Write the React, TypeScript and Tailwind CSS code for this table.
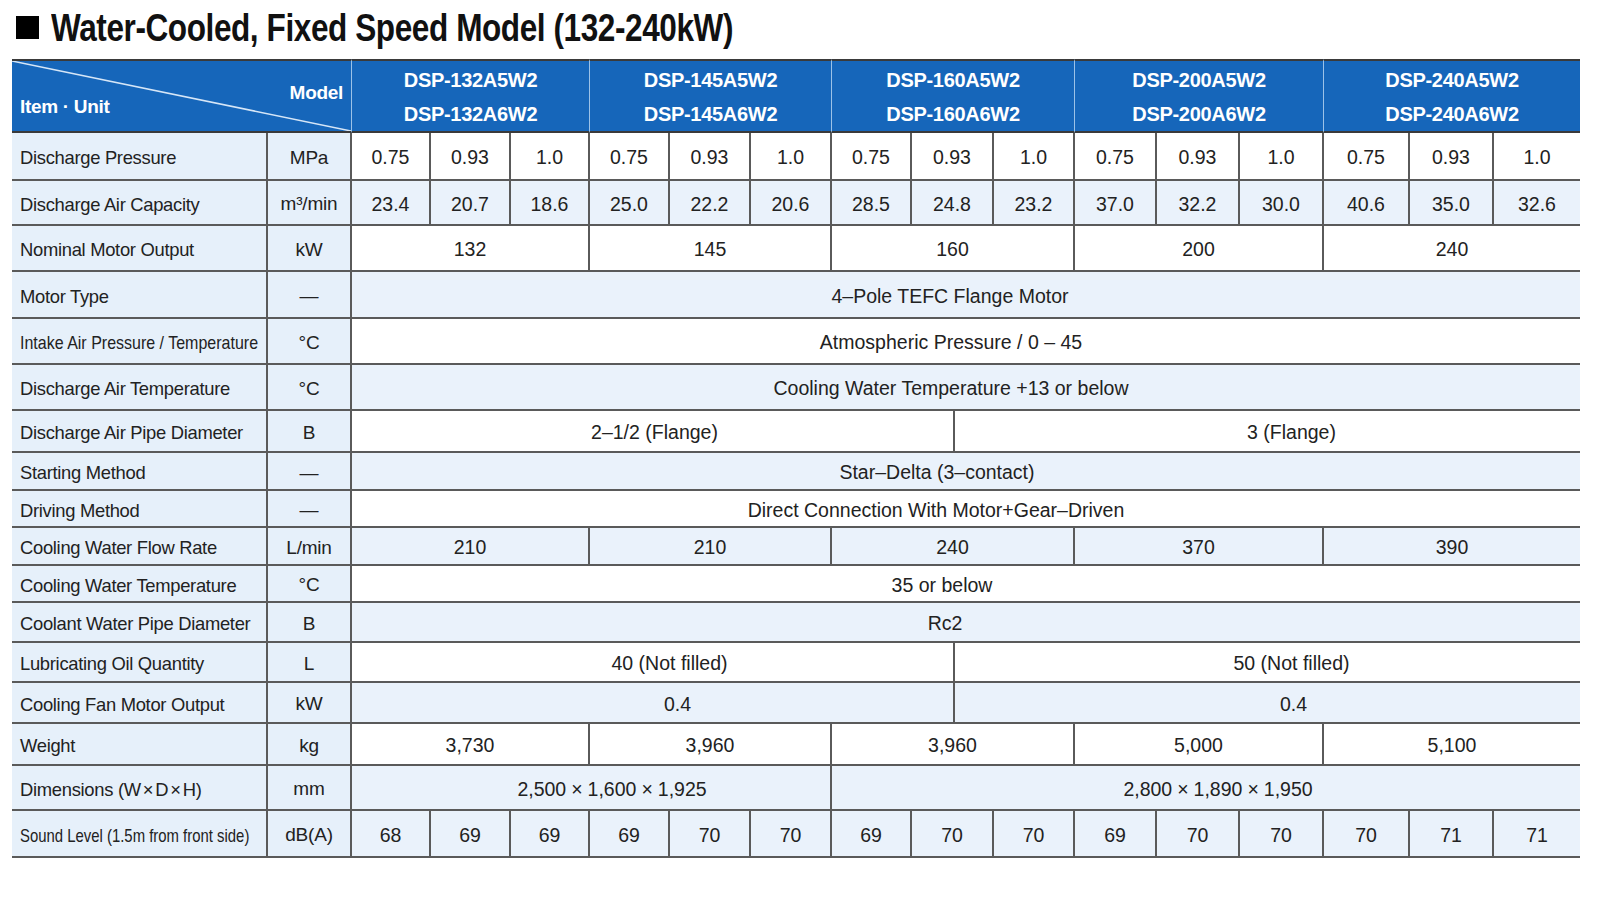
import React from 'react'

type Kind = 'triple' | 'group' | 'full' | 'half' | 'dim'

type Row = {
  label: React.ReactNode
  unit: string
  kind: Kind
  values: React.ReactNode[]
  blue: boolean
  squeeze?: string
  shift?: string[]
}

const spanClass: Record<number, string> = {
  1: 'col-span-1',
  2: 'col-span-2',
  3: 'col-span-3',
  4: 'col-span-4',
  6: 'col-span-6',
  8: 'col-span-8',
  10: 'col-span-10',
  16: 'col-span-16',
}

const spans: Record<Kind, number[]> = {
  triple: [1, 1, 1, 1, 1, 1, 1, 2, 1, 1, 1, 1, 1, 1, 1],
  group: [3, 3, 4, 3, 3],
  full: [16],
  half: [8, 8],
  dim: [6, 10],
}

const models = ['132', '145', '160', '200', '240']

// × with a bit of room either side, like the printed sheet
const X = ({ gap }: { gap: string }) => <span className={gap}>×</span>

const rows: Row[] = [
  {
    label: 'Discharge Pressure',
    unit: 'MPa',
    kind: 'triple',
    values: ['0.75', '0.93', '1.0', '0.75', '0.93', '1.0', '0.75', '0.93', '1.0', '0.75', '0.93', '1.0', '0.75', '0.93', '1.0'],
    blue: false,
  },
  {
    label: 'Discharge Air Capacity',
    unit: 'm³/min',
    kind: 'triple',
    values: ['23.4', '20.7', '18.6', '25.0', '22.2', '20.6', '28.5', '24.8', '23.2', '37.0', '32.2', '30.0', '40.6', '35.0', '32.6'],
    blue: true,
  },
  { label: 'Nominal Motor Output', unit: 'kW', kind: 'group', values: ['132', '145', '160', '200', '240'], blue: false },
  { label: 'Motor Type', unit: '—', kind: 'full', values: ['4–Pole TEFC Flange Motor'], blue: true, shift: ['pr-[32px]'] },
  {
    label: 'Intake Air Pressure / Temperature',
    unit: '°C',
    kind: 'full',
    values: ['Atmospheric Pressure / 0 – 45'],
    blue: false,
    squeeze: 'inline-block origin-left scale-x-[0.87] tracking-normal whitespace-nowrap',
    shift: ['pr-[30px]'],
  },
  {
    label: 'Discharge Air Temperature',
    unit: '°C',
    kind: 'full',
    values: ['Cooling Water Temperature +13 or below'],
    blue: true,
    shift: ['pr-[30px]'],
  },
  {
    label: 'Discharge Air Pipe Diameter',
    unit: 'B',
    kind: 'half',
    values: ['2–1/2 (Flange)', '3 (Flange)'],
    blue: false,
    shift: ['pl-[4px]', 'pl-[48px]'],
  },
  { label: 'Starting Method', unit: '—', kind: 'full', values: ['Star–Delta (3–contact)'], blue: true, shift: ['pr-[58px]'] },
  {
    label: 'Driving Method',
    unit: '—',
    kind: 'full',
    values: ['Direct Connection With Motor+Gear–Driven'],
    blue: false,
    shift: ['pr-[60px]'],
  },
  { label: 'Cooling Water Flow Rate', unit: 'L/min', kind: 'group', values: ['210', '210', '240', '370', '390'], blue: true },
  { label: 'Cooling Water Temperature', unit: '°C', kind: 'full', values: ['35 or below'], blue: false, shift: ['pr-[48px]'] },
  { label: 'Coolant Water Pipe Diameter', unit: 'B', kind: 'full', values: ['Rc2'], blue: true, shift: ['pr-[42px]'] },
  {
    label: 'Lubricating Oil Quantity',
    unit: 'L',
    kind: 'half',
    values: ['40 (Not filled)', '50 (Not filled)'],
    blue: false,
    shift: ['pl-[34px]', 'pl-[48px]'],
  },
  {
    label: 'Cooling Fan Motor Output',
    unit: 'kW',
    kind: 'half',
    values: ['0.4', '0.4'],
    blue: true,
    shift: ['pl-[50px]', 'pl-[52px]'],
  },
  { label: 'Weight', unit: 'kg', kind: 'group', values: ['3,730', '3,960', '3,960', '5,000', '5,100'], blue: false },
  {
    label: (
      <>
        Dimensions (W<X gap="mx-[2px]" />D<X gap="mx-[2px]" />H)
      </>
    ),
    unit: 'mm',
    kind: 'dim',
    values: [
      <>
        2,500<X gap="mx-[5px]" />1,600<X gap="mx-[5px]" />1,925
      </>,
      <>
        2,800<X gap="mx-[5px]" />1,890<X gap="mx-[5px]" />1,950
      </>,
    ],
    blue: true,
    shift: ['pl-[42px]', 'pl-[24px]'],
  },
  {
    label: 'Sound Level (1.5m from front side)',
    unit: 'dB(A)',
    kind: 'triple',
    values: ['68', '69', '69', '69', '70', '70', '69', '70', '70', '69', '70', '70', '70', '71', '71'],
    blue: true,
    squeeze: 'inline-block origin-left scale-x-[0.81] tracking-normal whitespace-nowrap',
  },
]

const headerSpans = ['col-span-3', 'col-span-3', 'col-span-4', 'col-span-3', 'col-span-3']

export default function App() {
  return (
    <div className="w-[1600px] h-[900px] bg-white font-['Liberation_Sans',Arial,sans-serif] text-[#222]">
      {/* title */}
      <div className="h-[59px] pb-[4px] pl-[16px] flex items-center">
        <div className="w-[23px] h-[23px] bg-black shrink-0" />
        <h1 className="ml-[12px] text-[38px] font-bold leading-none whitespace-nowrap origin-left scale-x-[0.83] tracking-[-0.5px] text-[#111]">
          Water-Cooled, Fixed Speed Model (132-240kW)
        </h1>
      </div>

      <div className="ml-[12px] w-[1568px] grid grid-cols-[256px_84px_79px_80px_79px_80px_81px_81px_80px_43px_39px_81px_82px_83px_84px_86px_84px_86px] grid-rows-[74px_48px_45px_46px_47px_46px_46px_42px_38px_37px_38px_37px_40px_40px_41px_42px_45px_47px]">
        {/* header */}
        <div className="col-span-2 relative bg-[#1666ba] border-t-2 border-b-2 border-r border-t-[#3a3a3a] border-b-[#3a3a3a] border-r-[#9cc2e8] text-white font-bold text-[19px] leading-[22px]">
          <svg className="absolute inset-0 w-full h-full" viewBox="0 0 100 100" preserveAspectRatio="none">
            <line x1="0" y1="0" x2="100" y2="100" stroke="#d6e6f7" strokeWidth="1.5" vectorEffect="non-scaling-stroke" />
          </svg>
          <span className="absolute right-[8px] top-[21px] tracking-[-0.3px]">Model</span>
          <span className="absolute left-[8px] top-[35px] tracking-[-0.3px]">Item · Unit</span>
        </div>
        {models.map((m, i) => (
          <div
            key={m}
            className={`${headerSpans[i]} ${i < 4 ? 'border-r border-r-[#9cc2e8]' : ''} bg-[#1666ba] border-t-2 border-b-2 border-t-[#3a3a3a] border-b-[#3a3a3a] pt-[2px] flex flex-col items-center justify-center text-white font-bold text-[20px] leading-[34px] tracking-[-0.3px]`}
          >
            <span>DSP-{m}A5W2</span>
            <span>DSP-{m}A6W2</span>
          </div>
        ))}

        {/* body */}
        {rows.map((r, ri) => {
          const sp = spans[r.kind]
          const data = r.blue ? 'bg-[#eaf2fb]' : 'bg-white'
          return (
            <React.Fragment key={ri}>
              <div className="bg-[#e6f0fa] border-b-2 border-r-2 border-[#5a5a5a] flex items-center pl-[8px] pt-[4px] text-[18.4px] tracking-[-0.3px] whitespace-nowrap overflow-hidden">
                <span className={r.squeeze ?? ''}>{r.label}</span>
              </div>
              <div className="bg-[#e6f0fa] border-b-2 border-r-2 border-[#5a5a5a] flex items-center justify-center pt-[4px] text-[19px] tracking-[-0.2px]">
                {r.unit}
              </div>
              {r.values.map((v, i) => (
                <div
                  key={i}
                  className={`${spanClass[sp[i]]} ${data} ${i === r.values.length - 1 ? 'border-b-2' : 'border-b-2 border-r-2'} ${r.shift?.[i] ?? ''} border-[#5a5a5a] pt-[4px] flex items-center justify-center text-[19.5px] whitespace-nowrap`}
                >
                  {v}
                </div>
              ))}
            </React.Fragment>
          )
        })}
      </div>
    </div>
  )
}
